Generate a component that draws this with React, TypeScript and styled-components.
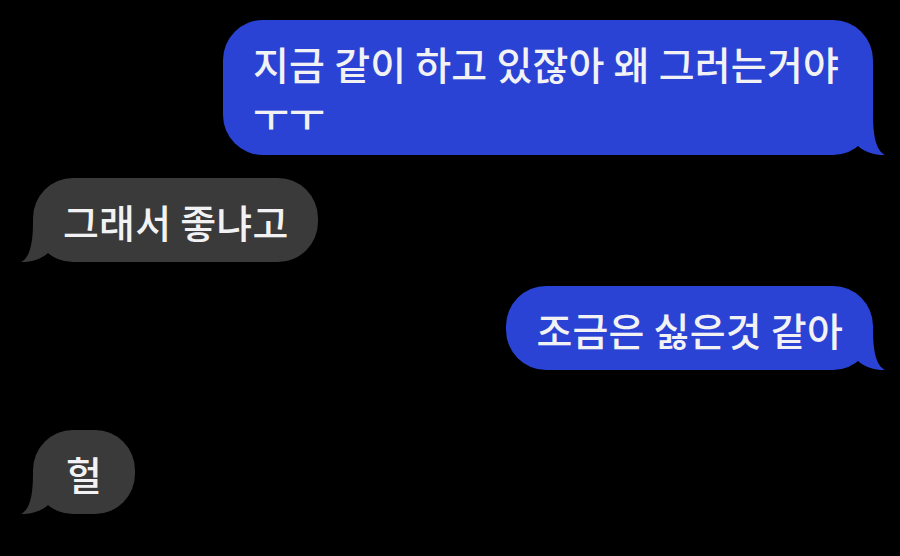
import React from 'react';
import styled, { createGlobalStyle } from 'styled-components';

const GlobalStyle = createGlobalStyle`
  html, body {
    margin: 0;
    padding: 0;
    background: #000;
  }
  body {
    font-family: "Noto Sans CJK KR", "Noto Sans", sans-serif;
  }
`;

const BLUE = '#2a43d4';
const GRAY = '#3a3a3a';

interface Message {
  text: string;
  mine: boolean;
  gap: number;
}

const messages: Message[] = [
  { text: '지금 같이 하고 있잖아 왜 그러는거야 ㅜㅜ', mine: true, gap: 0 },
  { text: '그래서 좋냐고', mine: false, gap: 23 },
  { text: '조금은 싫은것 같아', mine: true, gap: 24 },
  { text: '헐', mine: false, gap: 60 },
];

const Screen = styled.div`
  width: 900px;
  height: 556px;
  box-sizing: border-box;
  padding: 20px 27px 0 33px;
  background: #000;
  display: flex;
  flex-direction: column;
  overflow: hidden;
`;

const Row = styled.div<{ $mine: boolean; $gap: number }>`
  display: flex;
  justify-content: ${(p) => (p.$mine ? 'flex-end' : 'flex-start')};
  margin-top: ${(p) => p.$gap}px;
`;

const Bubble = styled.div<{ $mine: boolean }>`
  position: relative;
  max-width: 650px;
  min-width: 102px;
  box-sizing: border-box;
  padding: 18px 30px 15px;
  border-radius: 40px;
  background: ${(p) => (p.$mine ? BLUE : GRAY)};
  color: #f2f2f5;
  font-size: 39px;
  line-height: 51px;
  font-weight: 500;
  letter-spacing: 0.2px;
  text-align: ${(p) => (p.$mine ? 'left' : 'center')};
  word-break: keep-all;
`;

const Tail = styled.svg<{ $mine: boolean }>`
  position: absolute;
  bottom: 0;
  width: 32px;
  height: 40px;
  ${(p) => (p.$mine ? 'right: -12px;' : 'left: -12px; transform: scaleX(-1);')}
`;

const BubbleTail = ({ mine }: { mine: boolean }) => (
  <Tail $mine={mine} viewBox="0 0 32 40">
    <path
      d="M20 0 C20 24 24 36 32 40 C25 40.5 12 38 5 31 L5 0 Z"
      fill={mine ? BLUE : GRAY}
    />
  </Tail>
);

export default function App() {
  return (
    <>
      <GlobalStyle />
      <Screen>
        {messages.map((m, i) => (
          <Row key={i} $mine={m.mine} $gap={m.gap}>
            <Bubble $mine={m.mine}>
              {m.text}
              <BubbleTail mine={m.mine} />
            </Bubble>
          </Row>
        ))}
      </Screen>
    </>
  );
}
